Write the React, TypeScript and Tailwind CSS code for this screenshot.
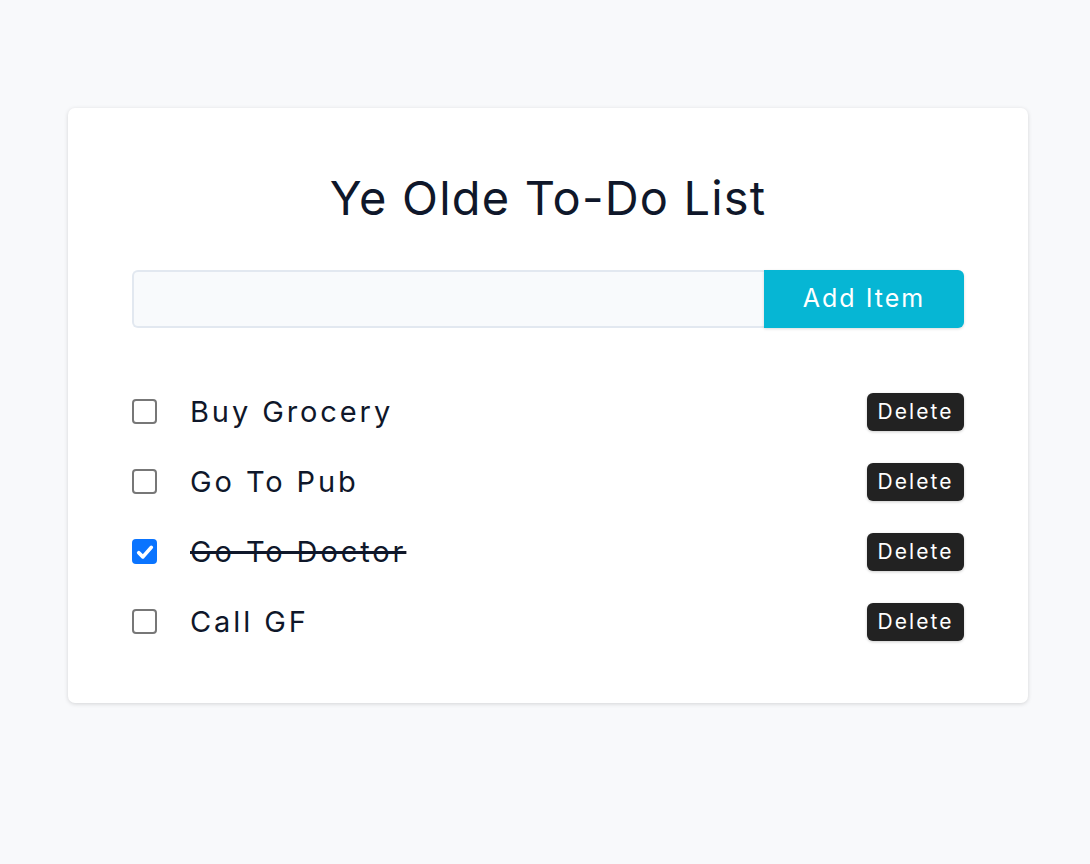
import React from "react";

const items = [
  { text: "Buy Grocery", done: false },
  { text: "Go To Pub", done: false },
  { text: "Go To Doctor", done: true },
  { text: "Call GF", done: false },
];

function Box({ checked }: { checked: boolean }) {
  if (checked) {
    return (
      <span className="flex h-[25px] w-[25px] items-center justify-center rounded-[4px] bg-[#0a74ff]">
        <svg viewBox="0 0 16 16" className="h-[20px] w-[20px]">
          <path d="M3 8.6l3.3 3.3L13 4.3" fill="none" stroke="white" strokeWidth="3" strokeLinecap="round" strokeLinejoin="round" />
        </svg>
      </span>
    );
  }
  return <span className="block h-[25px] w-[25px] rounded-[4px] border-2 border-[#777] bg-white" />;
}

export default function App() {
  return (
    <div className="min-h-[864px] bg-[#f8f9fb] pt-[108px] px-[68px]" style={{ fontFamily: "Inter, 'Noto Sans', sans-serif" }}>
      <div className="w-[960px] rounded-[7px] bg-white px-[64px] pt-[62px] pb-[62px] shadow-[0_1px_4px_rgba(0,0,0,0.15)]">
        <h1 className="text-center text-[47px] leading-[56px] font-normal text-[#0f172a] tracking-[0.025em]">Ye Olde To-Do List</h1>
        <div className="mt-[44px] flex h-[58px]">
          <div className="flex-1 rounded-l-[6px] border-2 border-r-0 border-[#e2e8f0] bg-[#f8fafc]" />
          <button className="w-[200px] rounded-r-[6px] bg-[#06b6d4] text-[25px] tracking-[0.08em] text-white shadow-[0_1px_3px_rgba(0,0,0,0.15)]">Add Item</button>
        </div>
        <ul className="mt-[64px] flex flex-col gap-[31px]">
          {items.map((it) => (
            <li key={it.text} className="flex h-[39px] items-center">
              <Box checked={it.done} />
              <span className={`ml-[33px] flex-1 text-[29px] tracking-[0.1em] text-[#0f172a] ${it.done ? "line-through decoration-[3px]" : ""}`}>{it.text}</span>
              <button className="h-[38px] w-[97px] rounded-[6px] bg-[#222] text-[21px] tracking-[0.1em] text-white shadow-[0_1px_3px_rgba(0,0,0,0.2)]">Delete</button>
            </li>
          ))}
        </ul>
      </div>
    </div>
  );
}
